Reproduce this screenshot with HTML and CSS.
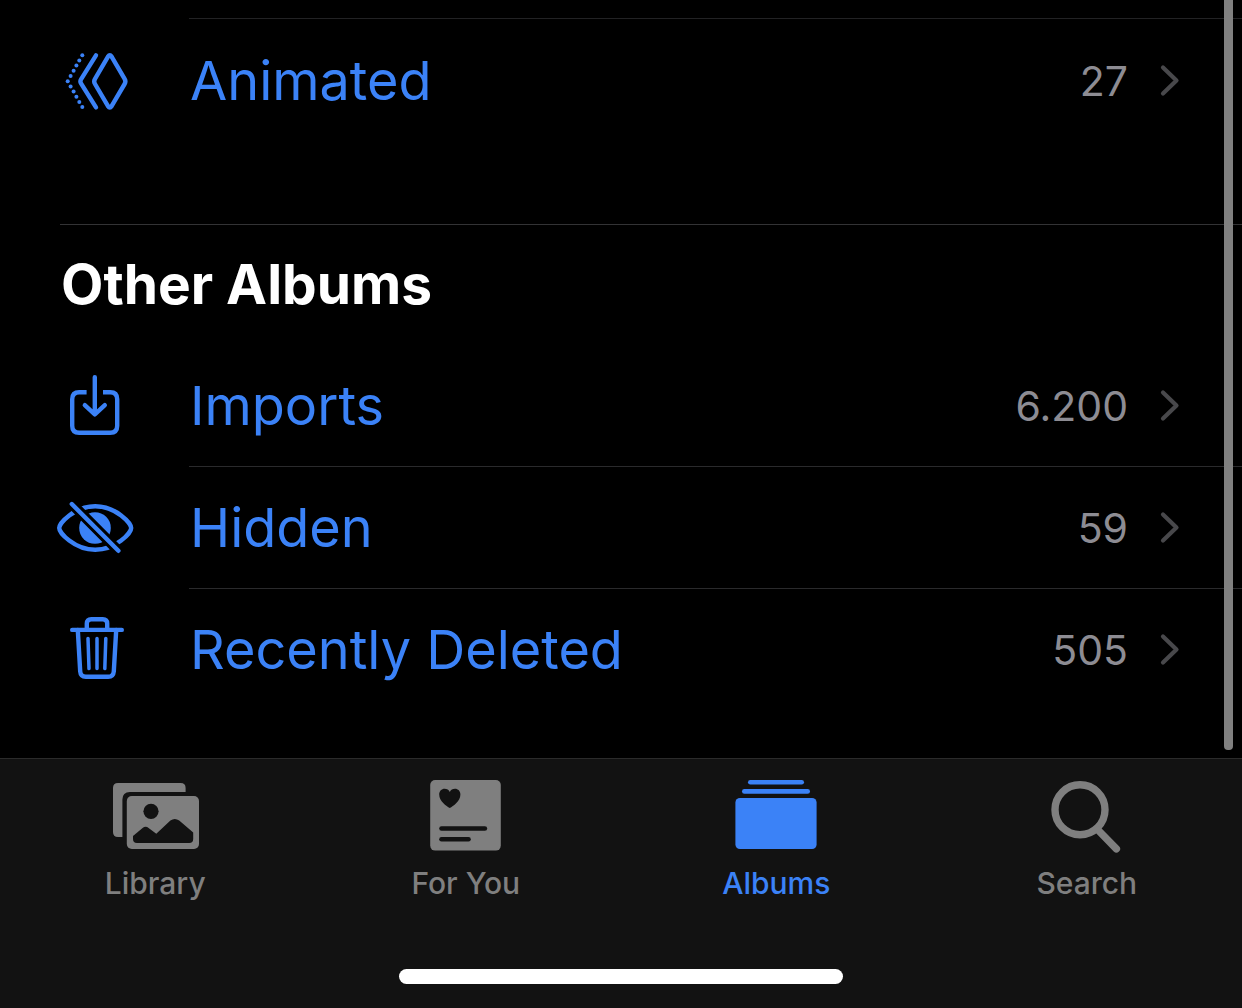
FILE: index.html
```html
<!DOCTYPE html>
<html lang="en">
<head>
    <meta charset="UTF-8">
    <meta name="viewport" content="width=device-width, initial-scale=1.0">
    <title>Albums</title>
    <link rel="stylesheet" href="styles.css">
</head>
<body>

    <main class="content">
        <section class="media-types">
            <a class="row" href="#animated">
                <svg class="row-icon" viewBox="0 1 80 81" aria-hidden="true">
                    <g class="dots">
                        <circle cx="27.3" cy="16.3" r="2"/>
                        <circle cx="24.3" cy="21.4" r="2"/>
                        <circle cx="21.4" cy="26.6" r="2"/>
                        <circle cx="18.6" cy="31.8" r="2"/>
                        <circle cx="15.6" cy="37" r="2"/>
                        <circle cx="12.7" cy="42.3" r="2"/>
                        <circle cx="15.6" cy="47.4" r="2"/>
                        <circle cx="18.6" cy="52.6" r="2"/>
                        <circle cx="21.4" cy="57.8" r="2"/>
                        <circle cx="24.3" cy="63" r="2"/>
                        <circle cx="27.3" cy="68" r="2"/>
                    </g>
                    <path d="M41 16.4L26 40.4Q24.8 42.4 26 44.4L41 68.4"/>
                    <path d="M53 17.6Q54.8 15 56.6 17.6L69.6 39.8Q71.2 42.4 69.6 45L56.6 67.2Q54.8 69.8 53 67.2L40 45Q38.4 42.4 40 39.8Z"/>
                </svg>
                <span class="row-name">Animated</span>
                <span class="row-count">27</span>
                <svg class="chevron" viewBox="0 0 20 33" aria-hidden="true"><path d="M3 3.5L16.5 16.5L3 29.5"/></svg>
            </a>
        </section>

        <section class="other-albums">
            <h2>Other Albums</h2>
            <a class="row" href="#imports">
                <svg class="row-icon" viewBox="0 0 80 81" aria-hidden="true">
                    <path class="cut" d="M31.6 27.2H24.2Q17.2 27.2 17.2 34.2V60.8Q17.2 67.8 24.2 67.8H55.2Q62.2 67.8 62.2 60.8V34.2Q62.2 27.2 55.2 27.2H48"/>
                    <path d="M39.8 12.2V48.8M29.8 40.2L39.8 49.4L49.8 40.2"/>
                </svg>
                <span class="row-name">Imports</span>
                <span class="row-count">6.200</span>
                <svg class="chevron" viewBox="0 0 20 33" aria-hidden="true"><path d="M3 3.5L16.5 16.5L3 29.5"/></svg>
            </a>
            <a class="row" href="#hidden">
                <svg class="row-icon" viewBox="0 0 80 81" aria-hidden="true">
                    <mask id="slash">
                        <rect class="show" width="80" height="81"/>
                        <path class="hide" d="M10 10L70.4 70.8"/>
                    </mask>
                    <g mask="url(#slash)">
                        <path d="M4.2 41C4.2 36.5 19 19.2 40.2 19.2S76.2 36.5 76.2 41S61.4 62.8 40.2 62.8S4.2 45.5 4.2 41Z"/>
                        <circle class="pupil" cx="40" cy="41" r="15.8"/>
                    </g>
                    <path d="M16.8 17L63.4 63.8"/>
                </svg>
                <span class="row-name">Hidden</span>
                <span class="row-count">59</span>
                <svg class="chevron" viewBox="0 0 20 33" aria-hidden="true"><path d="M3 3.5L16.5 16.5L3 29.5"/></svg>
            </a>
            <a class="row" href="#recently-deleted">
                <svg class="row-icon" viewBox="0 0 80 81" aria-hidden="true">
                    <path d="M17.2 20.9H66.8M31.8 20V14.6Q31.8 10.2 36.2 10.2H47.8Q52.2 10.2 52.2 14.6V20"/>
                    <path d="M22.8 21L25.2 62.4Q25.6 67.8 30.8 67.8H53.2Q58.4 67.8 58.8 62.4L61.2 21"/>
                    <path class="thin" d="M33 29.4L34 59.6M42 29.4V59.6M50.8 29.4L49.8 59.6"/>
                </svg>
                <span class="row-name">Recently Deleted</span>
                <span class="row-count">505</span>
                <svg class="chevron" viewBox="0 0 20 33" aria-hidden="true"><path d="M3 3.5L16.5 16.5L3 29.5"/></svg>
            </a>
        </section>
    </main>

    <div class="scroll-thumb"></div>

    <footer class="tab-bar">
        <nav class="tabs">
            <a class="tab" href="#library">
                <svg class="tab-icon" viewBox="0 0 90 80" aria-hidden="true">
                    <path d="M8 8H70.6Q75.6 8 75.6 13V17H20Q12.4 17 12.4 24.6V62H8Q3 62 3 57V13Q3 8 8 8Z"/>
                    <rect x="16.8" y="21" width="72.2" height="53" rx="5"/>
                    <circle class="hole" cx="41" cy="36.3" r="7.6"/>
                    <path class="hole" d="M23 61L32.6 52.9Q35.6 50.6 38.6 52.9L46.3 58.8L60.4 45.6Q64.8 42.4 69.2 45.6L83.2 57.4V64Q83.2 68 79.2 68H27Q23 68 23 64Z"/>
                </svg>
                <span>Library</span>
            </a>
            <a class="tab" href="#for-you">
                <svg class="tab-icon" viewBox="0 0 90 80" aria-hidden="true">
                    <rect x="9.2" y="5" width="70.6" height="70.6" rx="5"/>
                    <path class="hole" d="M28.8 33C25.4 31.4 18.2 26.2 18.2 19.6C18.2 16 20.6 13.8 23.6 13.8C26 13.8 27.8 15 28.8 17C29.8 15 31.6 13.8 34 13.8C37 13.8 39.4 16 39.4 19.6C39.4 26.2 32.2 31.4 28.8 33Z"/>
                    <rect class="hole" x="18.2" y="51.2" width="48" height="4.6" rx="2.3"/>
                    <rect class="hole" x="18.2" y="62" width="31.6" height="4.6" rx="2.3"/>
                </svg>
                <span>For You</span>
            </a>
            <a class="tab active" href="#albums" aria-current="page">
                <svg class="tab-icon" viewBox="0 0 90 80" aria-hidden="true">
                    <rect x="17" y="5" width="56" height="4.6" rx="2.3"/>
                    <rect x="11" y="14" width="68" height="4.8" rx="2.4"/>
                    <rect x="4.4" y="23" width="81.2" height="51" rx="4.5"/>
                </svg>
                <span>Albums</span>
            </a>
            <a class="tab" href="#search">
                <svg class="tab-icon" viewBox="0 0 90 80" aria-hidden="true">
                    <circle class="lens" cx="38" cy="34.7" r="25"/>
                    <path class="lens" d="M56 55L74.4 73.9"/>
                </svg>
                <span>Search</span>
            </a>
        </nav>
        <div class="home-indicator"></div>
    </footer>

</body>
</html>
```
FILE: styles.css
```css
* {
    box-sizing: border-box;
}
body {
    margin: 0;
    min-height: 100vh;
    display: flex;
    flex-direction: column;
    background-color: #000;
    font-family: Inter, Roboto, sans-serif;
}
.content {
    flex: 1;
    padding-top: 18px;
}
a {
    text-decoration: none;
}

/* Album rows */
.row {
    display: flex;
    align-items: center;
    height: 122px;
    padding: 0 62px 1px 55px;
    /* separator starts under the album name */
    background: linear-gradient(#2a2a2c, #2a2a2c) 189px 100% / 100% 1px no-repeat;
}
.row:last-child {
    background: none;
}
.media-types {
    /* separator of the row scrolled off above */
    background: linear-gradient(#222224, #222224) 189px 0 / 100% 1px no-repeat;
    padding: 2px 0 82px;
}
.other-albums {
    background: linear-gradient(#333335, #333335) 60px 0 / 100% 1px no-repeat;
    padding-bottom: 47px;
}
.other-albums h2 {
    margin: 0 0 27px;
    padding: 26px 62px 0 61px;
    color: #fff;
    font-size: 55px;
    font-weight: 700;
    line-height: 68px;
}
.row-icon {
    width: 80px;
    height: 81px;
    margin-right: 55px;
    fill: none;
    stroke: #3b82f7;
    stroke-width: 4.4;
    stroke-linecap: round;
    stroke-linejoin: round;
}
.row-icon .dots, .row-icon .pupil {
    fill: #3b82f7;
    stroke: none;
}
.row-icon .cut {
    stroke-linecap: butt;
}
.row-icon .thin {
    stroke-width: 3.5;
}
.row-icon .show {
    fill: #fff;
    stroke: none;
}
.row-icon .hide {
    stroke: #000;
    stroke-width: 10.4;
}
.row-name {
    flex: 1;
    color: #3b82f7;
    font-size: 54px;
    line-height: 68px;
}
.row-count {
    color: #8d8c93;
    font-size: 41px;
    line-height: 52px;
}
.chevron {
    width: 20px;
    height: 33px;
    margin-left: 32px;
    fill: none;
    stroke: #48484b;
    stroke-width: 4.2;
    stroke-linecap: round;
    stroke-linejoin: round;
}

.scroll-thumb {
    position: absolute;
    top: 0;
    right: 9px;
    width: 9px;
    height: 750px;
    border-radius: 0 0 4px 4px;
    background-color: #808080;
}

/* Bottom tab bar */
.tab-bar {
    padding: 16px 0 24px;
    border-top: 1px solid #2b2b2b;
    background-color: #121212;
}
.tabs {
    display: grid;
    grid-template-columns: repeat(4, 1fr);
}
.tab {
    display: flex;
    flex-direction: column;
    align-items: center;
    gap: 10px;
    color: #7f7f7f;
    font-size: 30px;
    font-weight: 500;
    line-height: 36px;
}
.tab.active {
    color: #3b82f7;
}
.tab-icon {
    width: 90px;
    height: 80px;
    fill: currentColor;
}
.tab-icon .hole {
    fill: #121212;
}
.tab-icon .lens {
    fill: none;
    stroke: currentColor;
    stroke-width: 7.4;
    stroke-linecap: round;
}
.home-indicator {
    width: 444px;
    max-width: 60%;
    height: 15px;
    margin: 68px auto 0;
    border-radius: 8px;
    background-color: #fff;
}
```
